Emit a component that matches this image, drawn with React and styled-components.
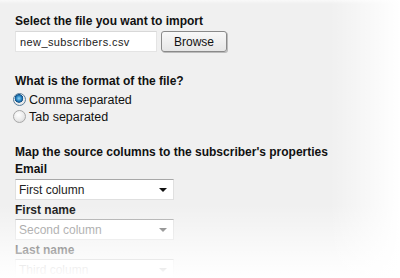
import React from "react";
import styled, { createGlobalStyle } from "styled-components";

const Global = createGlobalStyle`
  html, body { margin: 0; padding: 0; }
  body { background: #f0f0f0; font-family: "Liberation Sans", Arial, sans-serif; }
`;

const Page = styled.div`
  position: relative;
  width: 400px;
  height: 278px;
  overflow: hidden;
  background: #f0f0f0;
  box-sizing: border-box;
  padding: 14px 0 0 15px;
  display: flex;
  flex-direction: column;
`;

const Fade = styled.div`
  position: absolute;
  inset: 0;
  pointer-events: none;
  background:
    linear-gradient(to right, rgba(255,255,255,0) 330px, rgba(255,255,255,1) 400px),
    linear-gradient(to bottom, rgba(255,255,255,0) 205px, rgba(255,255,255,0.9) 270px, #fff 278px),
    linear-gradient(to bottom, rgba(255,255,255,0.6) 0px, rgba(255,255,255,0) 4px);
`;

const Heading = styled.div`
  font-weight: bold;
  font-size: 12px;
  line-height: 14px;
  color: #111;
`;

const Section = styled.div`
  display: flex;
  flex-direction: column;
  margin-top: ${(p) => p.$mt || 0}px;
`;

const FileRow = styled.div`
  display: flex;
  gap: 4px;
  margin-top: 3px;
`;

const TextBox = styled.div`
  width: 142px;
  height: 21px;
  box-sizing: border-box;
  background: #fff;
  border: 1px solid #e4e4e4;
  border-top-color: #d8d8d8;
  font-size: 11px;
  color: #222;
  padding: 4px 0 0 4px;
  letter-spacing: 0.4px;
`;

const Button = styled.div`
  width: 66px;
  height: 21px;
  box-sizing: border-box;
  border: 1px solid #8a8a8a;
  border-radius: 3px;
  background: linear-gradient(#f8f8f8, #e6e6e6);
  box-shadow: 1px 1px 0 #bcbcbc;
  font-size: 12px;
  color: #111;
  display: flex;
  align-items: center;
  justify-content: center;
`;

const RadioRow = styled.label`
  display: flex;
  align-items: center;
  gap: 3px;
  height: 17px;
  margin-left: -2px;
  margin-top: ${(p) => p.$mt || 0}px;
  font-size: 12.5px;
  color: #111;
`;

const RadioDot = styled.span`
  width: 13px;
  height: 13px;
  border-radius: 50%;
  box-sizing: border-box;
  border: 1px solid ${(p) => (p.$on ? "#5a7f9c" : "#a8a8a8")};
  background: ${(p) =>
    p.$on
      ? "radial-gradient(circle at 45% 40%, #8fd4f6 0, #2a86c4 2.5px, #0f4f86 4px, #eeeeee 4.6px, #dcdcdc 100%)"
      : "radial-gradient(circle at 40% 35%, #ffffff 0, #e8e8e8 60%, #cfcfcf 100%)"};
`;

const Label = styled.div`
  font-weight: bold;
  font-size: 12px;
  line-height: 14px;
  color: #111;
  margin-top: ${(p) => p.$mt || 0}px;
`;

const Select = styled.div`
  width: 159px;
  height: 21px;
  box-sizing: border-box;
  background: #fff;
  border: 1px solid #e0e0e0;
  border-top: 1px solid #a8a8a8;
  margin-top: ${(p) => p.$mt ?? 2}px;
  display: flex;
  align-items: center;
  justify-content: space-between;
  padding: 0 6px 0 3px;
  font-size: 12px;
  color: ${(p) => (p.$muted ? "#888" : "#222")};
`;

const Caret = styled.span`
  width: 0;
  height: 0;
  border-left: 4px solid transparent;
  border-right: 4px solid transparent;
  border-top: 4px solid ${(p) => (p.$muted ? "#666" : "#111")};
`;

export default function App() {
  return (
    <>
      <Global />
      <Page>
        <Section>
          <Heading>Select the file you want to import</Heading>
          <FileRow>
            <TextBox>new_subscribers.csv</TextBox>
            <Button>Browse</Button>
          </FileRow>
        </Section>
        <Section $mt={22}>
          <Heading>What is the format of the file?</Heading>
          <RadioRow $mt={3}>
            <RadioDot $on />
            Comma separated
          </RadioRow>
          <RadioRow>
            <RadioDot />
            Tab separated
          </RadioRow>
        </Section>
        <Section $mt={20}>
          <Heading>Map the source columns to the subscriber's properties</Heading>
          <Label $mt={3}>Email</Label>
          <Select $mt={3}>
            First column
            <Caret />
          </Select>
          <Label $mt={3}>First name</Label>
          <Select $muted>
            Second column
            <Caret $muted />
          </Select>
          <Label $mt={3}>Last name</Label>
          <Select $muted>
            Third column
            <Caret $muted />
          </Select>
        </Section>
        <Fade />
      </Page>
    </>
  );
}
